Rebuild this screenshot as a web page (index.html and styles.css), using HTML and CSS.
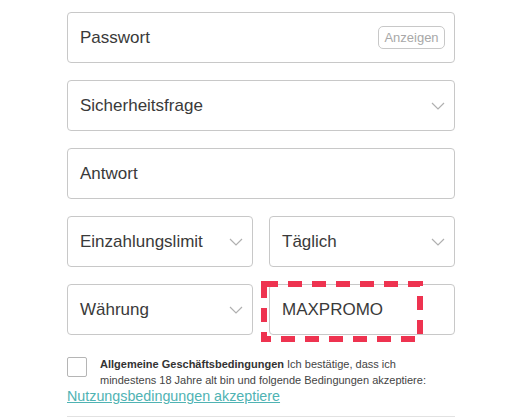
FILE: index.html
```html
<!DOCTYPE html>
<html lang="de">
<head>
    <meta charset="UTF-8">
    <meta name="viewport" content="width=device-width, initial-scale=1.0">
    <title>Registrierung</title>
    <link rel="stylesheet" href="styles.css">
</head>
<body>
    <form class="signup">
        <div class="field">
            <span class="value">Passwort</span>
            <span class="show-btn">Anzeigen</span>
        </div>
        <div class="field select">
            <span class="value">Sicherheitsfrage</span>
            <svg class="chevron" width="14" height="8" viewBox="0 0 14 8"><polyline points="1,1 7,7 13,1"/></svg>
        </div>
        <div class="field">
            <span class="value">Antwort</span>
        </div>
        <div class="row">
            <div class="field select">
                <span class="value">Einzahlungslimit</span>
                <svg class="chevron" width="14" height="8" viewBox="0 0 14 8"><polyline points="1,1 7,7 13,1"/></svg>
            </div>
            <div class="field select">
                <span class="value">Täglich</span>
                <svg class="chevron" width="14" height="8" viewBox="0 0 14 8"><polyline points="1,1 7,7 13,1"/></svg>
            </div>
        </div>
        <div class="row">
            <div class="field select">
                <span class="value">Währung</span>
                <svg class="chevron" width="14" height="8" viewBox="0 0 14 8"><polyline points="1,1 7,7 13,1"/></svg>
            </div>
            <div class="field promo">
                <span class="value">MAXPROMO</span>
                <!-- highlight frame around the promo code -->
                <svg class="highlight" width="162" height="61" viewBox="0 0 162 61">
                    <rect x="3" y="3" width="156" height="55"/>
                </svg>
            </div>
        </div>

        <div class="terms">
            <span class="checkbox"></span>
            <p><strong>Allgemeine Geschäftsbedingungen</strong> Ich bestätige, dass ich mindestens 18 Jahre alt bin und folgende Bedingungen akzeptiere:</p>
        </div>
        <a class="terms-link" href="#">Nutzungsbedingungen akzeptiere</a>
        <hr class="divider">
    </form>
</body>
</html>
```

FILE: styles.css
```css
body {
    margin: 0;
    font-family: "Liberation Sans", Arial, sans-serif;
    background: #fff;
    color: #333;
}
.signup {
    width: 388px;
    margin: 12px 0 0 67px;
}
.field {
    box-sizing: border-box;
    height: 51px;
    border: 1px solid #c8c8c8;
    border-radius: 4px;
    padding: 0 9px 0 12px;
    margin-bottom: 17px;
    display: flex;
    align-items: center;
    justify-content: space-between;
    font-size: 17px;
    position: relative;
}
.value {
    color: #3a3a3a;
}
.show-btn {
    box-sizing: border-box;
    width: 67px;
    height: 23px;
    border: 1px solid #c8c8c8;
    border-radius: 5px;
    color: #a8a8a8;
    font-size: 13px;
    display: flex;
    align-items: center;
    justify-content: center;
}
.chevron polyline {
    fill: none;
    stroke: #b0b0b0;
    stroke-width: 1.2;
}
.row {
    display: flex;
    gap: 16px;
}
.row .field {
    flex: 1;
}
.highlight {
    position: absolute;
    left: -9px;
    top: -4px;
}
.highlight rect {
    fill: none;
    stroke: #ee3350;
    stroke-width: 6;
    stroke-dasharray: 14 10;
}
.terms {
    display: flex;
    gap: 13px;
    margin-top: 4px;
}
.checkbox {
    flex: none;
    box-sizing: border-box;
    width: 20px;
    height: 20px;
    margin-top: 1px;
    border: 1px solid #b5b5b5;
    border-radius: 2px;
}
.terms p {
    margin: 0;
    font-size: 11px;
    line-height: 16px;
    color: #444;
}
.terms strong {
    color: #333;
}
.terms-link {
    display: block;
    font-size: 14.3px;
    line-height: 16px;
    color: #4fb3b3;
}
.divider {
    border: 0;
    border-top: 1px solid #e2e2e2;
    margin: 12px 0 0;
}
```
